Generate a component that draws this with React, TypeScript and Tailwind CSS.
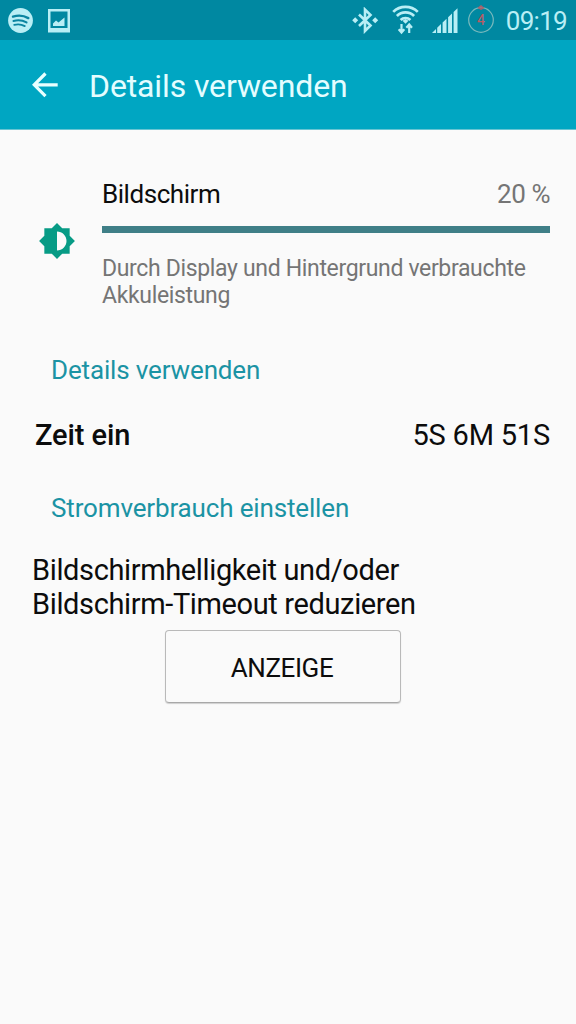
import type { ReactNode } from "react";

function SpotifyIcon() {
  return (
    <svg className="size-[26px]" viewBox="0 0 26 26" fill="none">
      <circle cx="12.500" cy="13.500" r="12.400" fill="#b9eef5" />
      <g stroke="#0a84a0" strokeLinecap="round">
        <path d="M5 9.600c5-1.500 11-1 15.300 1.500" strokeWidth="2.400" />
        <path d="M5.500 13.900c4.300-1.200 9.200-.7 13 1.500" strokeWidth="2.100" />
        <path d="M6.200 17.800c3.600-.9 7.500-.5 10.600 1.300" strokeWidth="1.800" />
      </g>
    </svg>
  );
}

function PictureIcon() {
  return (
    <svg className="h-6 w-[22px]" viewBox="0 0 22 24">
      <path fill="#b9eef5" fillRule="evenodd" d="M0 0h22v23.500H0zM2.500 2.500v16.500h17V2.500z" />
      <path fill="#b9eef5" d="M5 17v-2.500l3-3 2.500 2 6-5V17z" />
    </svg>
  );
}

function BluetoothIcon() {
  return (
    <svg className="h-[27px] w-[27px]" viewBox="0 0 27 27" fill="none">
      <path d="M7 7.500l11.500 11-5.500 5.500V2.600l5.500 5.400L7 19" stroke="#b9eef5" strokeWidth="2.600" />
      <path d="M.2 13.200l3-3 3 3-3 3zM20.200 13.200l3-3 3 3-3 3z" fill="#b9eef5" />
    </svg>
  );
}

function WifiIcon() {
  return (
    <svg className="h-[30px] w-[27px]" viewBox="0 0 27 30" fill="none">
      <g stroke="#b9eef5" strokeWidth="2.700">
        <path d="M1.200 6.900a17.500 17.500 0 0 1 24.600 0" />
        <path d="M4.900 11a12 12 0 0 1 17.200 0" />
        <path d="M8.600 15a7 7 0 0 1 9.800 0" />
      </g>
      <path d="M10.500 15.700l3-1.700 3 1.700-3 3z" fill="#b9eef5" />
      <path d="M9.500 19v8M6.700 24.200l2.800 3.300 2.800-3.300M17.200 28v-8M14.400 22.700l2.800-3.300 2.800 3.300" stroke="#b9eef5" strokeWidth="2.200" />
    </svg>
  );
}

function SignalIcon() {
  return (
    <svg className="h-[25px] w-[26px]" viewBox="0 0 26 25" fill="#b9eef5">
      <path d="M0 25l4-3.900V25zM5.200 19.700l3.800-3.700V25H5.200zM10.600 14.600l3.900-3.800V25h-3.900zM16.100 9.300l3.900-3.800V25h-3.900zM21.600 4l3.900-3.800V25h-3.900z" />
    </svg>
  );
}

function CountdownIcon() {
  return (
    <svg className="h-[30px] w-[28px]" viewBox="0 0 28 30" fill="none">
      <circle cx="14" cy="16" r="12.300" stroke="#78b9bd" strokeWidth="1.200" />
      <path d="M11.500 3.800l2.500-2 2.500 2-2.500 1.500zM14 2v4" stroke="#a8616b" strokeWidth="1.300" />
      <text x="14" y="20.500" textAnchor="middle" fontSize="14" fontFamily="Roboto, sans-serif" fill="#c05a62">
        4
      </text>
    </svg>
  );
}

function SectionTitle({ children }: { children: ReactNode }) {
  return (
    <h2 className="pl-[51px] text-[26px] leading-8 tracking-[-0.15px] whitespace-nowrap text-[#1b93a4]">{children}</h2>
  );
}

export default function App() {
  return (
    <div className="flex h-[1024px] w-[576px] flex-col overflow-hidden bg-[#fafafa] font-[Roboto,sans-serif] text-[#0c0c0c]">
      <div className="flex h-10 shrink-0 items-start bg-[#0088a1] text-[#b9eef5]">
        <div className="flex gap-[14px] pt-[7px] pl-[8px]">
          <SpotifyIcon />
          <div className="pt-[2px]">
            <PictureIcon />
          </div>
        </div>
        <div className="ml-auto flex pr-[9px]">
          <div className="pt-[7px] pr-[13px]">
            <BluetoothIcon />
          </div>
          <div className="pt-[5px] pr-[13px]">
            <WifiIcon />
          </div>
          <div className="pt-[8px] pr-[9px]">
            <SignalIcon />
          </div>
          <div className="pt-[4px] pr-[11px]">
            <CountdownIcon />
          </div>
          <span className="pt-[5px] text-[26px] leading-8 tracking-[-0.7px]">09:19</span>
        </div>
      </div>

      <header className="flex h-[90px] shrink-0 items-center border-b border-[#68c5d3] bg-[#00a6c2] pl-8">
        <svg className="h-[26px] w-[26px]" viewBox="0 0 26 26" fill="none" stroke="#e9ffff" strokeWidth="3.200">
          <path d="M13.500 1.500L2.200 12.800l11.300 11.400M2.200 12.800h23.500" />
        </svg>
        <h1 className="pt-[2px] pl-[31px] text-[32px] leading-10 tracking-[-0.12px] text-[#e4fdff]">
          Details verwenden
        </h1>
      </header>

      <main className="flex flex-col">
        <section className="flex items-center pt-[48px] pr-[26px] pl-[38px]">
          <svg className="-mt-[6px] size-[38px] shrink-0" viewBox="0 0 24 24" fill="#079b85">
            <path d="M20 15.310L23.310 12 20 8.690V4h-4.690L12 .69 8.690 4H4v4.690L.69 12 4 15.310V20h4.690L12 23.310 15.310 20H20v-4.690zM12 18V6c3.310 0 6 2.690 6 6s-2.690 6-6 6z" />
          </svg>
          <div className="flex grow flex-col pl-[26px]">
            <div className="flex justify-between text-[26px] leading-8 tracking-[-0.45px]">
              <span>Bildschirm</span>
              <span className="text-[#757575]">20 %</span>
            </div>
            <div className="mt-[16px] h-[7px] bg-[#3f7f87]" />
            <p className="mt-[22px] text-[23px] leading-[27px] tracking-[-0.34px] whitespace-nowrap text-[#757575]">
              Durch Display und Hintergrund verbrauchte
              <br />
              Akkuleistung
            </p>
          </div>
        </section>

        <div className="mt-[45px]">
          <SectionTitle>Details verwenden</SectionTitle>
        </div>
        <div className="mt-[31px] flex justify-between pr-[26px] pl-[35px] text-[29px] leading-9">
          <span className="font-medium tracking-[-0.1px]">Zeit ein</span>
          <span className="tracking-[-0.2px]">5S 6M 51S</span>
        </div>
        <div className="mt-[39px]">
          <SectionTitle>Stromverbrauch einstellen</SectionTitle>
        </div>
        <p className="mt-[29px] pl-8 text-[29px] leading-[34px] tracking-[-0.37px]">
          Bildschirmhelligkeit und/oder
          <br />
          Bildschirm-Timeout reduzieren
        </p>
        <button className="mt-[9px] ml-[165px] h-[73px] w-[236px] rounded-[4px] border border-[#b9b9b9] border-b-[#a8a8a8] pt-[2px] pr-[2px] text-[26px] leading-8 tracking-[-0.4px] shadow-[0_1px_1px_#cfcfcf]">
          ANZEIGE
        </button>
      </main>
    </div>
  );
}
